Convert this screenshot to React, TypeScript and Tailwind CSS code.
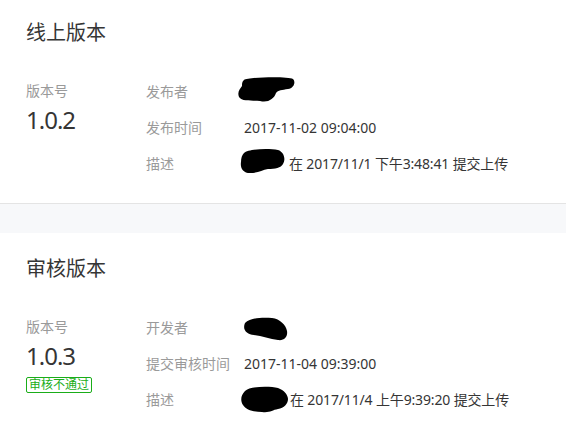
import React from 'react'

// redaction marks drawn over personal names
function Blob({ d, w, h, className }: { d: string; w: number; h: number; className?: string }) {
  return (
    <svg width={w} height={h} viewBox={`0 0 ${w} ${h}`} className={className}>
      <path d={d} fill="#000" />
    </svg>
  )
}

const blobs = {
  a: 'M6 3 C10 0 50 -1 55 2 C58 5 56 11 50 12 C44 13 40 13 38 16 C36 22 30 26 22 24 C14 23 4 25 1 20 C-1 15 2 12 4 9 C4 6 4 5 6 3 Z',
  b: 'M4 4 C8 0 28 -1 38 1 C44 3 46 10 43 15 C41 19 35 20 28 20 C22 21 18 24 10 24 C3 24 0 19 1 13 C1 9 2 6 4 4 Z',
  c: 'M3 6 C8 1 20 0 30 1 C38 2 44 8 45 14 C46 20 42 24 36 23 C28 22 20 19 12 18 C5 17 0 13 3 6 Z',
  d: 'M5 5 C10 0 30 0 38 2 C44 4 48 9 48 13 C48 18 44 22 38 23 C32 24 30 27 22 26 C14 26 6 24 3 19 C0 14 1 9 5 5 Z',
}

type Row = { label: string; value: React.ReactNode }

function Section({
  title,
  version,
  badge,
  rows,
  top,
}: {
  title: string
  version: string
  badge?: string
  rows: Row[]
  top: string
}) {
  return (
    <section className={`bg-white px-[26px] ${top}`}>
      <h2 className="text-[20px] leading-[28px] text-[#353535] font-normal">{title}</h2>
      <div className="mt-[26px] flex">
        <div className="w-[120px] pt-[8px]">
          <div className="text-[14px] leading-[20px] text-[#9a9a9a]">版本号</div>
          <div className="mt-[4px] text-[24px] leading-[30px] tracking-[-1px] text-[#353535]">{version}</div>
          {badge && (
            <span className="mt-[5px] inline-block border border-[#1aad19] rounded-[2px] px-[2px] text-[12px] leading-[14px] text-[#1aad19]">
              {badge}
            </span>
          )}
        </div>
        <div className="flex flex-col">
          {rows.map((r) => (
            <div key={r.label} className="flex h-[36px] items-center text-[14px]">
              <div className="w-[98px] text-[#9a9a9a]">{r.label}</div>
              <div className="flex items-center text-[#353535]">{r.value}</div>
            </div>
          ))}
        </div>
      </div>
    </section>
  )
}

export default function App() {
  return (
    <div
      className="w-[566px] h-[427px] overflow-hidden bg-[#f7f8fa]"
      style={{ fontFamily: '"Noto Sans", "Noto Sans CJK SC", sans-serif' }}
    >
      <div className="border-b border-[#e4e4e4] pb-[22px] bg-white">
        <Section
          title="线上版本"
          version="1.0.2"
          top="pt-[19px]"
          rows={[
            { label: '发布者', value: <Blob d={blobs.a} w={57} h={26} className="-ml-[6px] -mt-[2px]" /> },
            { label: '发布时间', value: '2017-11-02 09:04:00' },
            {
              label: '描述',
              value: (
                <>
                  <Blob d={blobs.b} w={45} h={24} className="-ml-[4px] -mt-[4px]" />
                  <span className="ml-[4px] tracking-[-0.15px]">在 2017/11/1 下午3:48:41 提交上传</span>
                </>
              ),
            },
          ]}
        />
      </div>
      <div className="h-[29px]" />
      <Section
        title="审核版本"
        version="1.0.3"
        badge="审核不通过"
        top="pt-[22px] pb-[20px]"
        rows={[
          { label: '开发者', value: <Blob d={blobs.c} w={46} h={24} className="-ml-[2px] mt-[4px]" /> },
          { label: '提交审核时间', value: '2017-11-04 09:39:00' },
          {
            label: '描述',
            value: (
              <>
                <Blob d={blobs.d} w={49} h={27} className="-ml-[4px]" />
                <span className="ml-[1px] tracking-[-0.15px]">在 2017/11/4 上午9:39:20 提交上传</span>
              </>
            ),
          },
        ]}
      />
    </div>
  )
}
